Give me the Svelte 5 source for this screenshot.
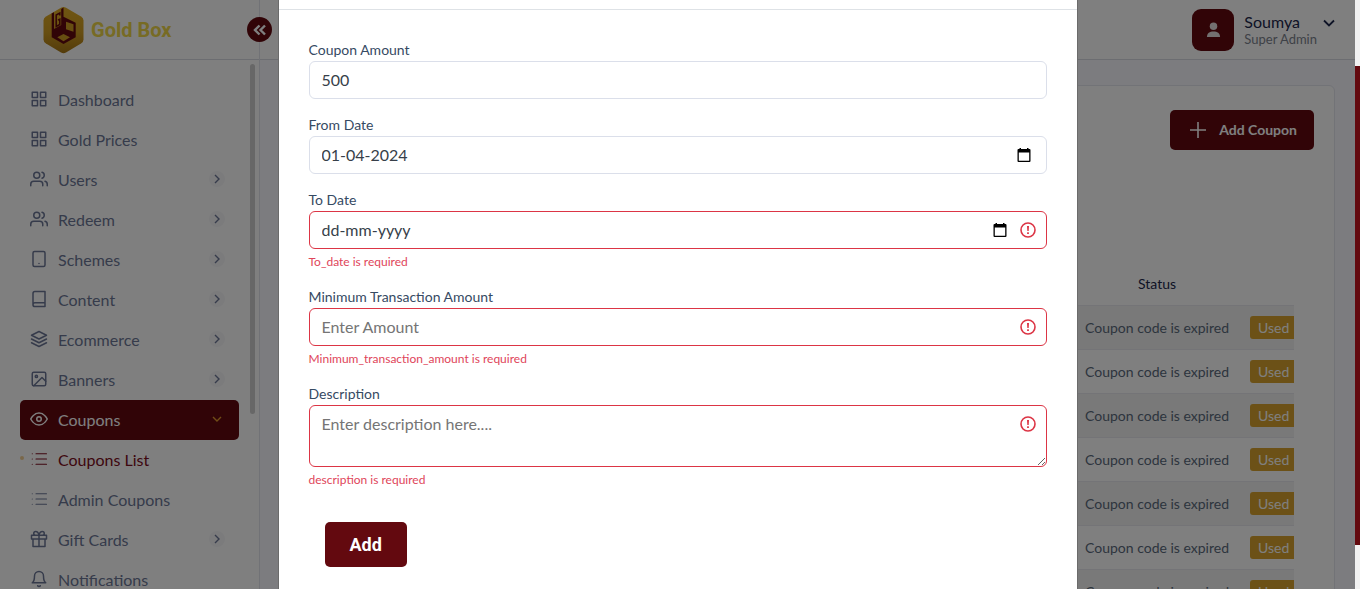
<script>
  const menu = [
    { label: 'Dashboard', icon: 'grid' },
    { label: 'Gold Prices', icon: 'grid' },
    { label: 'Users', icon: 'users', sub: true },
    { label: 'Redeem', icon: 'users', sub: true },
    { label: 'Schemes', icon: 'tablet', sub: true },
    { label: 'Content', icon: 'book', sub: true },
    { label: 'Ecommerce', icon: 'layers', sub: true },
    { label: 'Banners', icon: 'image', sub: true },
    { label: 'Coupons', icon: 'eye', sub: true, open: true },
    { label: 'Coupons List', icon: 'list', current: true },
    { label: 'Admin Coupons', icon: 'list' },
    { label: 'Gift Cards', icon: 'gift', sub: true },
    { label: 'Notifications', icon: 'bell' }
  ];
  const coupons = Array.from({ length: 7 }, (_, id) => ({ id, status: 'Coupon code is expired', tag: 'Used' }));

  let amount = $state('500');
  let fromDate = $state('01-04-2024');
  let toDate = $state('');
  let minimum = $state('');
  let description = $state('');
</script>

{#snippet icon(name)}
  <svg class="icon" viewBox="0 0 24 24" aria-hidden="true">
    {#if name === 'grid'}
      <path d="M3 3h7v7H3zM14 3h7v7h-7zM14 14h7v7h-7zM3 14h7v7H3z" />
    {:else if name === 'users'}
      <path d="M17 21v-2a4 4 0 0 0-4-4H5a4 4 0 0 0-4 4v2M23 21v-2a4 4 0 0 0-3-3.87M16 3.13a4 4 0 0 1 0 7.75" />
      <circle cx="9" cy="7" r="4" />
    {:else if name === 'tablet'}
      <rect x="4" y="2" width="16" height="20" rx="2" /><path d="M12 18h.01" />
    {:else if name === 'book'}
      <path d="M4 19.5A2.5 2.5 0 0 1 6.500 17H20M6.500 2H20v20H6.500A2.500 2.500 0 0 1 4 19.500v-15A2.500 2.500 0 0 1 6.500 2z" />
    {:else if name === 'layers'}
      <path d="M12 2 2 7l10 5 10-5-10-5zM2 17l10 5 10-5M2 12l10 5 10-5" />
    {:else if name === 'image'}
      <rect x="3" y="3" width="18" height="18" rx="2" /><circle cx="8.500" cy="8.500" r="1.500" /><path d="m21 15-5-5L5 21" />
    {:else if name === 'eye'}
      <path d="M1 12s4-8 11-8 11 8 11 8-4 8-11 8-11-8-11-8z" /><circle cx="12" cy="12" r="3" />
    {:else if name === 'list'}
      <path d="M8 5h14M8 12h14M8 19h14M3 5h.01M3 12h.01M3 19h.01" />
    {:else if name === 'gift'}
      <path d="M20 12v10H4V12M2 7h20v5H2zM12 22V7M12 7H7.500a2.500 2.500 0 0 1 0-5C11 2 12 7 12 7zM12 7h4.500a2.500 2.500 0 0 0 0-5C13 2 12 7 12 7z" />
    {:else if name === 'bell'}
      <path d="M18 8A6 6 0 0 0 6 8c0 7-3 9-3 9h18s-3-2-3-9M13.730 21a2 2 0 0 1-3.460 0" />
    {/if}
  </svg>
{/snippet}

{#snippet alert()}
  <svg class="alert" viewBox="0 0 16 16" aria-hidden="true">
    <circle cx="8" cy="8" r="7" />
    <path d="M7 4h2l-.3 5H7.300z" /><rect x="7.100" y="10.300" width="1.800" height="1.700" />
  </svg>
{/snippet}

{#snippet calendar(label)}
  <button type="button" class="calendar" aria-label={label}>
    <svg viewBox="0 0 16 16" aria-hidden="true">
      <path fill-rule="evenodd" d="M3.500 1H5v1h6V1h1.500v1H13.500a1 1 0 0 1 1 1v11a1 1 0 0 1-1 1h-11a1 1 0 0 1-1-1V3a1 1 0 0 1 1-1h1zM2.800 5.500v8.200h10.400V5.500z" />
    </svg>
  </button>
{/snippet}

<div class="page">
  <aside class="sidebar">
    <div class="brand">
      <svg class="logo" viewBox="0 0 41 47" aria-hidden="true">
        <defs>
          <linearGradient id="gold" x1="0" y1="0" x2="0" y2="1">
            <stop offset="0" stop-color="#e0ac24" /><stop offset=".55" stop-color="#cf9c22" /><stop offset="1" stop-color="#a87716" />
          </linearGradient>
        </defs>
        <path d="M18 .8q2.500-1.400 5 0l15 8.700q2.500 1.500 2.500 4v19q0 2.500-2.500 4l-15 9q-2.500 1.400-5 0L3 36.500Q.5 35 .5 32.500v-19q0-2.500 2.500-4z" fill="url(#gold)" />
        <path d="M8.700 6.500 11 5.200V22l7.200-4V2L20.500.5v9.200l12.200 6v14.600L20.500 37 8.700 30.300z" fill="#63090f" />
        <path d="m23 14.700 7.500 2.600v7.400L23 22.300zM14.300 30.300l6.200-3.300 6.500 3.300-6.500 4z" fill="#cf9c22" />
        <path d="M16.800 8.500V6L13.200 8v11.500l3.600-2v-5.300l-1.900 1" class="mark" />
      </svg>
      <span>Gold Box</span>
    </div>
    <button class="collapse" aria-label="Collapse menu">
      <svg viewBox="0 0 16 16" aria-hidden="true"><path d="M7.500 3.500 3 8l4.500 4.500M13 3.500 8.500 8l4.500 4.500" /></svg>
    </button>
    <nav>
      {#each menu as item}
        <a href="#menu" class:open={item.open} class:current={item.current} class:thin={item.icon === 'list'}>
          {@render icon(item.icon)}
          <span class="name">{item.label}</span>
          {#if item.sub}
            <span class="arrow"><svg viewBox="0 0 10 10" aria-hidden="true"><path d="M3 1l4 4-4 4" /></svg></span>
          {/if}
        </a>
      {/each}
    </nav>
    <div class="nav-thumb"></div>
  </aside>

  <div class="main">
    <header>
      <span class="avatar">
        <svg viewBox="0 0 16 16" aria-hidden="true"><circle cx="8" cy="4" r="4" /><path d="M1 15.500c0-4.500 3-6 7-6s7 1.500 7 6z" /></svg>
      </span>
      <div class="who"><strong>Soumya</strong><small>Super Admin</small></div>
      <button class="account" aria-label="Account menu">
        <svg viewBox="0 0 12 8" aria-hidden="true"><path d="m1 1.500 5 5 5-5" /></svg>
      </button>
    </header>
    <section class="card">
      <button class="add-coupon">
        <svg viewBox="0 0 16 16" aria-hidden="true"><path d="M8 0v16M0 8h16" /></svg>
        <span>Add Coupon</span>
      </button>
      <table>
        <colgroup><col /><col class="col-status" /><col class="col-tag" /></colgroup>
        <thead><tr><td></td><th scope="col">Status</th><td></td></tr></thead>
        <tbody>
          {#each coupons as row (row.id)}
            <tr><td></td><td>{row.status}</td><td><span class="tag">{row.tag}</span></td></tr>
          {/each}
        </tbody>
      </table>
    </section>
  </div>

  <div class="overlay">
    <div class="shade">
      <div class="dialog" role="dialog" aria-label="Add Coupon">
        <div class="dialog-head"></div>
        <form novalidate>
          <div class="field">
            <label for="amount">Coupon Amount</label>
            <div class="control"><input id="amount" type="text" inputmode="numeric" bind:value={amount} /></div>
          </div>
          <div class="field">
            <label for="from">From Date</label>
            <div class="control">
              <input id="from" type="text" placeholder="dd-mm-yyyy" bind:value={fromDate} />
              {@render calendar('Choose from date')}
            </div>
          </div>
          <div class="field">
            <label for="to">To Date</label>
            <div class="control invalid">
              <input id="to" class="date" type="text" placeholder="dd-mm-yyyy" aria-invalid="true" aria-describedby="to-error" bind:value={toDate} />
              {@render calendar('Choose to date')}
              {@render alert()}
            </div>
            <p id="to-error">To_date is required</p>
          </div>
          <div class="field">
            <label for="minimum">Minimum Transaction Amount</label>
            <div class="control invalid">
              <input id="minimum" type="text" placeholder="Enter Amount" aria-invalid="true" aria-describedby="minimum-error" bind:value={minimum} />
              {@render alert()}
            </div>
            <p id="minimum-error">Minimum_transaction_amount is required</p>
          </div>
          <div class="field">
            <label for="description">Description</label>
            <div class="control invalid area">
              <textarea id="description" rows="2" placeholder="Enter description here...." aria-invalid="true" aria-describedby="description-error" bind:value={description}></textarea>
              {@render alert()}
            </div>
            <p id="description-error">description is required</p>
          </div>
          <button type="button" class="submit">Add</button>
        </form>
      </div>
    </div>
    <div class="rail"><div class="rail-thumb"></div></div>
  </div>
</div>

<style>
  :global(body) { margin: 0; font-family: Lato, sans-serif; }
  .page, .page * { box-sizing: border-box; }
  .page { position: relative; display: flex; height: 100vh; overflow: hidden; background: #f9f9ff; color: #364a63; }
  button { border: 0; padding: 0; font: inherit; color: inherit; background: none; cursor: pointer; }
  svg { display: block; fill: none; stroke: currentColor; flex: none; }

  .sidebar { position: relative; flex: none; width: 260px; background: #fff; border-right: 1px solid #e2e4ec; }
  .brand { display: flex; align-items: center; gap: 7px; height: 60px; padding: 1px 0 0 43px; border-bottom: 1px solid #d8dae2; font: 700 20px Roboto, sans-serif; color: #eed648; }
  .logo { width: 41px; height: 47px; stroke: none; }
  .mark { stroke: #63090f; stroke-width: 1.500; fill: none; }
  .collapse { position: absolute; top: 17px; right: -13px; display: grid; place-items: center; width: 25px; height: 25px; border-radius: 50%; background: #63090f; color: #fff; }
  .collapse svg { width: 16px; height: 16px; stroke-width: 2.400; }
  nav { padding: 20px 20px 0; }
  nav a { display: flex; align-items: center; gap: 10px; height: 40px; padding: 0 10px 2px; border-radius: 5px; font-size: 16px; color: #6c7796; text-decoration: none; }
  .icon { width: 18px; height: 18px; stroke-width: 2; stroke-linecap: round; stroke-linejoin: round; }
  .thin .icon { stroke-width: 1.500; }
  .name { flex: 1; }
  .arrow { display: grid; place-items: center; width: 16px; height: 16px; margin-right: 4px; border-radius: 50%; background: #f7f7f9; }
  .arrow svg { width: 10px; height: 10px; stroke-width: 1.400; }
  nav a.open { background: #63090f; color: #fff; }
  .open .arrow { background: none; color: #e0992c; transform: rotate(90deg); }
  nav a.current { position: relative; color: #7d0d20; }
  nav a.current::before { content: ''; position: absolute; left: 0; top: 16px; width: 4px; height: 4px; border-radius: 50%; background: #f3cf95; }
  .nav-thumb { position: absolute; top: 64px; right: 4px; width: 5px; height: 350px; border-radius: 3px; background: #cfcfcf; }

  .main { flex: 1; min-width: 0; margin-right: 5px; }
  header { display: flex; align-items: center; justify-content: flex-end; height: 60px; padding-right: 20px; border-bottom: 1px solid #d8dae2; background: #fff; }
  .avatar { display: grid; place-items: center; width: 42px; height: 42px; margin-right: 10px; border-radius: 9px; background: #63090f; color: #e6e0e0; }
  .avatar svg { width: 15px; height: 16px; fill: currentColor; stroke: none; }
  .who { display: grid; }
  .who strong { font-size: 16px; font-weight: 400; line-height: 19px; color: #1c274c; }
  .who small { font-size: 13px; line-height: 16px; color: #7d838e; }
  .account { margin-left: 6px; color: #1c274c; }
  .account svg { width: 12px; height: 8px; margin-bottom: 14px; stroke-width: 1.800; }
  .card { height: 640px; margin: 25px 20px 0 25px; padding: 24px 40px 0 25px; border: 1px solid #e4e6ee; border-radius: 6px; background: #fff; }
  .add-coupon { display: flex; align-items: center; gap: 13px; height: 40px; margin: 0 -20px 0 auto; padding: 0 17px 0 20px; border-radius: 5px; background: #63090f; color: #fff; font-size: 14px; font-weight: 700; }
  .add-coupon span { padding-bottom: 2px; }
  .add-coupon svg { width: 16px; height: 16px; stroke-width: 1.600; }
  table { width: 100%; margin-top: 114px; table-layout: fixed; border-collapse: collapse; font-size: 14px; }
  .col-status { width: 186px; }
  .col-tag { width: 44px; }
  th { height: 41px; padding: 0 0 2px; font-weight: 400; color: #1c274c; }
  tbody td { height: 44px; padding: 0; border-top: 1px solid #e9e9ee; overflow: hidden; text-align: center; white-space: nowrap; color: #5b6a7c; }
  tbody tr:nth-child(odd) { background: #f2f2f2; }
  .tag { display: block; padding: 0 8px; border-radius: 3px 0 0 3px; background: #d8a32e; color: #fff; line-height: 23px; text-align: left; }

  .overlay { position: absolute; inset: 0; display: flex; }
  .shade { flex: 1; display: flex; justify-content: center; background: rgb(0 0 0 / 50%); }
  .dialog { width: 800px; max-width: 100%; background: #fff; border: solid #6b6b6b; border-width: 0 1px; }
  .dialog-head { height: 10px; border-bottom: 1px solid #dee2e6; }
  form { padding: 30px 30px 0; }
  .field { margin-bottom: 16px; }
  label { display: block; padding-bottom: 2px; font-size: 14px; line-height: 19px; color: #364a63; }
  .control { display: flex; align-items: center; gap: 12px; height: 38px; padding-right: 10px; border: 1px solid #dbdfea; border-radius: 6px; background: #fff; }
  .invalid { border-color: #dc3545; }
  input, textarea { flex: 1; min-width: 0; height: 100%; padding: 0 0 2px 12px; border: 0; outline: 0; background: none; font: 16px/24px Lato, sans-serif; color: #373f4a; }
  input::placeholder, textarea::placeholder { color: #757575; }
  .date::placeholder { color: #373f4a; }
  .alert { width: 16px; height: 16px; color: #dc3545; stroke-width: 1.600; }
  .alert path, .alert rect { fill: currentColor; stroke: none; }
  .calendar svg { width: 16px; height: 16px; margin-right: 4px; fill: #000; stroke: none; }
  .invalid .calendar svg { margin-right: 0; }
  .area { position: relative; height: auto; padding: 0; }
  textarea { display: block; height: 60px; padding: 6px 36px 6px 12px; resize: vertical; }
  .area .alert { position: absolute; top: 10px; right: 10px; }
  p { margin: 4px 0 0; font-size: 12px; line-height: 18px; color: #e0455a; }
  .submit { display: block; height: 45px; margin: 33px 0 0 16px; padding: 0 25px; border-radius: 5px; background: #63090f; color: #fff; font: 700 18px Roboto, sans-serif; }
  .rail { width: 5px; padding-top: 66px; background: #f1f1f1; }
  .rail-thumb { height: 479px; background: #63090f; }
</style>
